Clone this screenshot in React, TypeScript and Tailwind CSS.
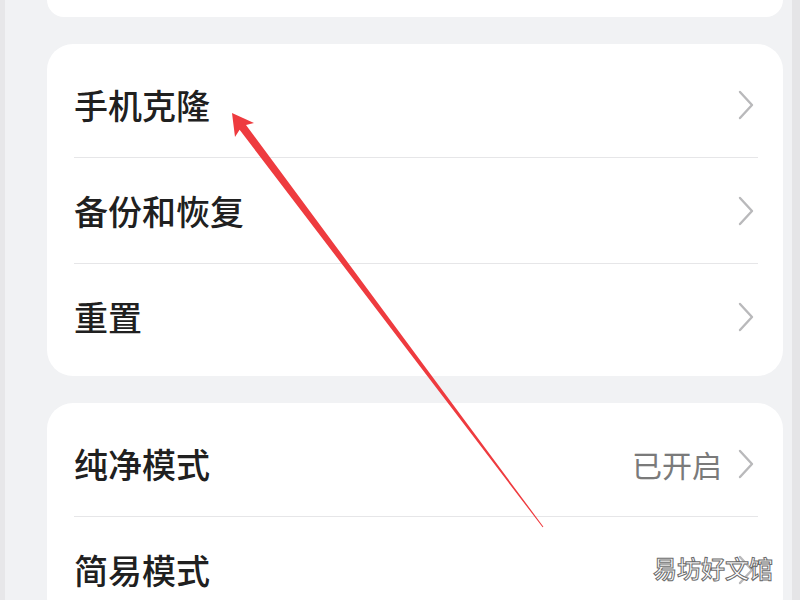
import React from "react";

const font = { fontFamily: '"Noto Sans CJK SC", "Noto Sans", sans-serif' };

function Chevron() {
  return (
    <svg width="16" height="30" viewBox="0 0 16 30" className="shrink-0">
      <path d="M2 2 L14 15 L2 28" fill="none" stroke="#b9b9bb" strokeWidth="2.4" strokeLinecap="round" strokeLinejoin="round" />
    </svg>
  );
}

function Row(props: { label: string; value?: string; last?: boolean }) {
  return (
    <div className={"flex items-center justify-between h-[106px] shrink-0 " + (props.last ? "" : "border-b border-[#e6e6e8]")}>
      <span className="text-[34px] font-medium text-[#202020] leading-none">{props.label}</span>
      <div className="flex items-center gap-[16px] pr-[4px]">
        {props.value && <span className="text-[30px] text-[#7a7a7a] leading-none">{props.value}</span>}
        <Chevron />
      </div>
    </div>
  );
}

export default function App() {
  return (
    <div className="relative w-[800px] h-[600px] overflow-hidden flex bg-[#f1f2f4]" style={font}>
      <div className="w-[5px] bg-[#e7e7e9]" />
      <div className="flex-1 flex flex-col gap-[27px] pl-[42px] pr-[9px]">
        <div className="h-[17px] shrink-0 bg-white rounded-b-[26px]" />
        <div className="shrink-0 bg-white rounded-[26px] pl-[27px] pr-[25px] pt-[8px] pb-[6px]">
          <Row label="手机克隆" />
          <Row label="备份和恢复" />
          <Row label="重置" last />
        </div>
        <div className="shrink-0 bg-white rounded-[26px] pl-[27px] pr-[25px] pt-[8px]">
          <Row label="纯净模式" value="已开启" />
          <Row label="简易模式" last />
        </div>
      </div>
      <div className="w-[8px] bg-[#e5e5e7]" />

      <svg className="absolute inset-0" width="800" height="600" viewBox="0 0 800 600">
        <polygon
          points="232,113 254,123 246,125 543.4,526.7 542.6,527.3 239.6,129.8 235,137"
          fill="#ee3b3f"
        />
      </svg>

      <div className="absolute left-[653px] top-[556px] text-[24px] font-medium leading-none text-white [-webkit-text-stroke:1px_#6b6b6b]">
        易坊好文馆
      </div>
    </div>
  );
}
